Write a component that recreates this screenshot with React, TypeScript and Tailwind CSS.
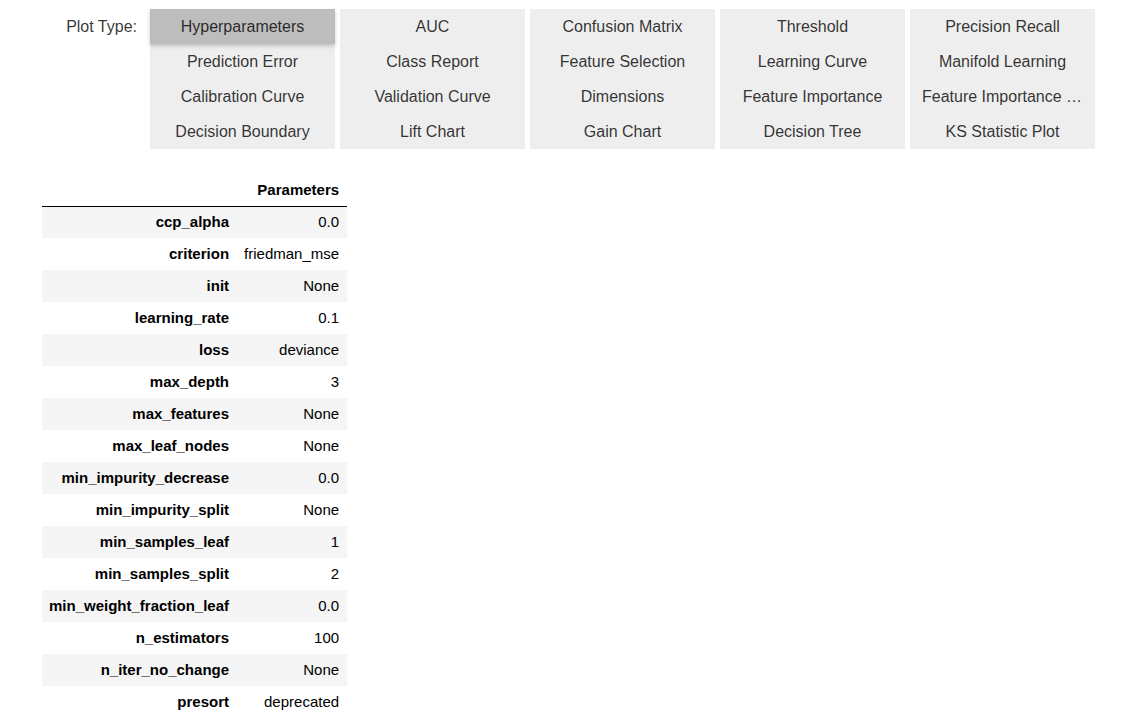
import React from 'react';

const plotTypes = [
  'Hyperparameters', 'AUC', 'Confusion Matrix', 'Threshold', 'Precision Recall',
  'Prediction Error', 'Class Report', 'Feature Selection', 'Learning Curve', 'Manifold Learning',
  'Calibration Curve', 'Validation Curve', 'Dimensions', 'Feature Importance', 'Feature Importance (All)',
  'Decision Boundary', 'Lift Chart', 'Gain Chart', 'Decision Tree', 'KS Statistic Plot',
];

const params: [string, string][] = [
  ['ccp_alpha', '0.0'],
  ['criterion', 'friedman_mse'],
  ['init', 'None'],
  ['learning_rate', '0.1'],
  ['loss', 'deviance'],
  ['max_depth', '3'],
  ['max_features', 'None'],
  ['max_leaf_nodes', 'None'],
  ['min_impurity_decrease', '0.0'],
  ['min_impurity_split', 'None'],
  ['min_samples_leaf', '1'],
  ['min_samples_split', '2'],
  ['min_weight_fraction_leaf', '0.0'],
  ['n_estimators', '100'],
  ['n_iter_no_change', 'None'],
  ['presort', 'deprecated'],
];

const App: React.FC = () => {
  return (
    <div className="min-h-screen bg-white text-black" style={{ fontFamily: '"Liberation Sans", Arial, sans-serif' }}>
      <div className="flex pt-[9px]">
        <div className="w-[137px] h-[35px] flex items-center justify-end text-[16px] text-black/80 shrink-0">
          Plot Type:
        </div>
        <div className="ml-[13px] grid grid-cols-[repeat(5,185px)] gap-x-[5px]">
          {plotTypes.map((p, i) => (
            <button
              key={p}
              className={
                'h-[35px] px-3 text-[16px] text-black/80 truncate ' +
                (i === 0 ? 'bg-[#bdbdbd] shadow-[0_2px_4px_rgba(0,0,0,0.2)] relative z-10' : 'bg-[#eeeeee]')
              }
            >
              {p}
            </button>
          ))}
        </div>
      </div>

      <table className="ml-[42px] mt-[26px] border-collapse text-[15px] text-black">
        <thead>
          <tr className="border-b border-black">
            <th className="h-[31px] w-[195px]"></th>
            <th className="h-[31px] w-[110px] text-right pr-[8px] font-bold align-middle">Parameters</th>
          </tr>
        </thead>
        <tbody>
          {params.map(([k, v], i) => (
            <tr key={k} className={i % 2 === 0 ? 'bg-[#f5f5f5]' : 'bg-white'}>
              <th className="h-[32px] text-right pr-[8px] pl-[7px] font-bold whitespace-nowrap">{k}</th>
              <td className="h-[32px] text-right pr-[8px] pl-[7px] whitespace-nowrap">{v}</td>
            </tr>
          ))}
        </tbody>
      </table>
    </div>
  );
};

export default App;
